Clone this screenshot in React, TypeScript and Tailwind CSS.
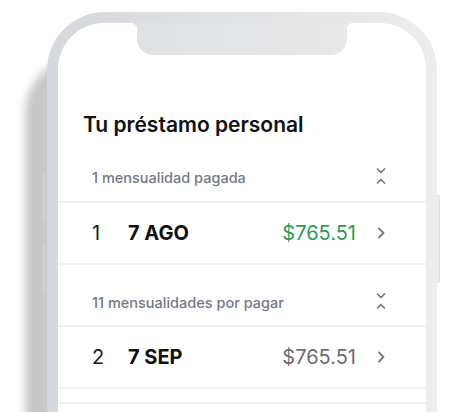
const FONT = "font-['Inter','Noto_Sans',sans-serif]";

function CollapseIcon() {
  return (
    <svg viewBox="0 0 10 18" width="10" height="18" fill="none" stroke="#737987" strokeWidth="1.7" strokeLinecap="round" strokeLinejoin="round">
      <path d="M1.5 2l3.5 3.5L8.5 2" />
      <path d="M1.5 16l3.5-3.5L8.5 16" />
    </svg>
  );
}

function ChevronRight() {
  return (
    <svg viewBox="0 0 10 12" width="10" height="12" fill="none" stroke="#737987" strokeWidth="1.8" strokeLinecap="round" strokeLinejoin="round">
      <path d="M3 1.5l4.5 4.5L3 10.5" />
    </svg>
  );
}

function Divider() {
  return <div className="h-[2px] bg-[#f0f1f4]" />;
}

function SectionHeader({ label, tall }: { label: string; tall?: boolean }) {
  return (
    <div
      className={
        tall
          ? "flex h-[62px] items-start justify-between pl-[34px] pr-[40px] pt-[29px]"
          : "flex h-[60px] items-start justify-between pl-[34px] pr-[40px] pt-[28px]"
      }>
      <span className="text-[14.5px] font-medium leading-[20px] text-[#737987]">{label}</span>
      <span className="mt-[-1px]">
        <CollapseIcon />
      </span>
    </div>
  );
}

function PaymentRow({ n, date, amount, paid }: { n: number; date: string; amount: string; paid?: boolean }) {
  return (
    <div className="flex h-[60px] items-center pl-[34px] pr-[40px] text-[20px] leading-[28px]">
      <span className="w-[36px] text-[#1a1a1a]">{n}</span>
      <span className="font-bold text-[#111111]">{date}</span>
      <span className={paid ? "ml-auto text-[#2f9a55]" : "ml-auto text-[#6d6d6d]"}>{amount}</span>
      <span className="ml-[20px] flex">
        <ChevronRight />
      </span>
    </div>
  );
}

export default function App() {
  return (
    <div className={`h-[412px] w-[464px] overflow-hidden bg-white pl-[47px] pt-[12px] ${FONT}`}>
      <div className="relative h-[470px] w-[390px] rounded-[58px] bg-gradient-to-r from-[#d5d8dc] to-[#ededed] p-[11px] shadow-[-22px_44px_8px_#c7c7c7]">
        {/* side buttons */}
        <div className="absolute left-[-5px] top-[160px] h-[51px] w-[4px] rounded-l-[2px] bg-[#cfcfd0]" />
        <div className="absolute left-[-5px] top-[231px] h-[52px] w-[4px] rounded-l-[2px] bg-[#cfcfd0]" />
        <div className="absolute right-[-3px] top-[183px] h-[88px] w-[3px] rounded-r-[2px] border border-l-0 border-[#dedede] bg-[#ececec]" />

        <div className="relative h-full w-full overflow-hidden rounded-[46px] bg-white">
          {/* notch */}
          <div className="absolute left-1/2 top-0 h-[32px] w-[210px] -translate-x-1/2 rounded-b-[16px] bg-gradient-to-r from-[#dfe1e3] to-[#e9e9ea]">
            <div className="absolute left-[-7px] top-0 h-[7px] w-[7px] bg-[radial-gradient(circle_at_0_100%,transparent_7px,#dfe1e3_7.5px)]" />
            <div className="absolute right-[-7px] top-0 h-[7px] w-[7px] bg-[radial-gradient(circle_at_100%_100%,transparent_7px,#e9e9ea_7.5px)]" />
          </div>

          <div className="pt-[88px]">
            <h1 className="px-[25px] text-[21px] font-semibold leading-[28px] text-[#111111]">Tu préstamo personal</h1>
            <SectionHeader label="1 mensualidad pagada" tall />
            <Divider />
            <PaymentRow n={1} date="7 AGO" amount="$765.51" paid />
            <Divider />
            <SectionHeader label="11 mensualidades por pagar" />
            <Divider />
            <PaymentRow n={2} date="7 SEP" amount="$765.51" />
            <Divider />
            <div className="h-[13px]" />
            <Divider />
          </div>
        </div>
      </div>
    </div>
  );
}
